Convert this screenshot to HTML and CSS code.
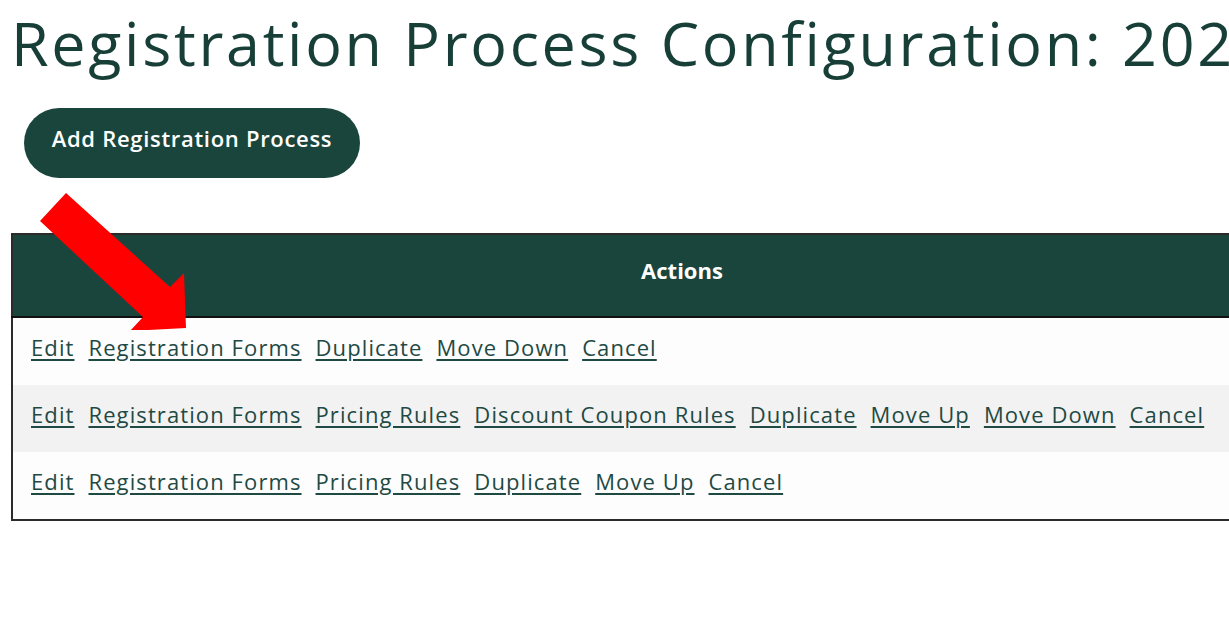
FILE: index.html
```html
<!DOCTYPE html>
<html>
<head>
<meta charset="utf-8">
<link rel="stylesheet" href="styles.css">
</head>
<body>
<div class="page">
  <h1 class="title">Registration Process Configuration: 2024-2025</h1>
  <div class="toolbar">
    <button class="btn-add" type="button">Add Registration Process</button>
  </div>
  <div class="table-wrap">
    <table class="grid">
      <thead>
        <tr><th>Actions</th></tr>
      </thead>
      <tbody>
        <tr class="row-a"><td>
          <a href="#">Edit</a><a href="#">Registration Forms</a><a href="#">Duplicate</a><a href="#">Move Down</a><a href="#">Cancel</a>
        </td></tr>
        <tr class="row-b"><td>
          <a href="#">Edit</a><a href="#">Registration Forms</a><a href="#">Pricing Rules</a><a href="#">Discount Coupon Rules</a><a href="#">Duplicate</a><a href="#">Move Up</a><a href="#">Move Down</a><a href="#">Cancel</a>
        </td></tr>
        <tr class="row-c"><td>
          <a href="#">Edit</a><a href="#">Registration Forms</a><a href="#">Pricing Rules</a><a href="#">Duplicate</a><a href="#">Move Up</a><a href="#">Cancel</a>
        </td></tr>
      </tbody>
    </table>
  </div>
  <svg class="arrow" width="200" height="150" viewBox="0 180 200 150" xmlns="http://www.w3.org/2000/svg">
    <polygon points="40,221 66,193 170,287 184,273 186,328 130,331 143,317" fill="#ff0000"/>
  </svg>
</div>
</body>
</html>
```

FILE: styles.css
```css
html, body {
  margin: 0;
  padding: 0;
  background: #ffffff;
}
body {
  font-family: "Open Sans", "Liberation Sans", sans-serif;
  overflow: hidden;
}
.page {
  position: relative;
  width: 1229px;
  height: 624px;
  overflow: hidden;
}
.title {
  margin: 1px 0 0 0;
  padding-left: 11px;
  font-size: 61px;
  line-height: 83px;
  font-weight: 400;
  color: #173f37;
  white-space: nowrap;
  letter-spacing: 2.7px;
}
.toolbar {
  padding: 24px 0 0 24px;
}
.btn-add {
  width: 336px;
  height: 70px;
  border: none;
  border-radius: 35px;
  background: #1a453c;
  color: #ffffff;
  font-family: "Open Sans", "Liberation Sans", sans-serif;
  font-size: 22px;
  font-weight: 600;
  padding: 0 0 10px 0;
  letter-spacing: 0.7px;
}
.table-wrap {
  padding: 55px 0 0 11px;
}
.grid {
  width: 1342px;
  border-collapse: collapse;
  border: 2px solid #2b2b2b;
}
.grid th {
  height: 69px;
  background: #1a453c;
  color: #ffffff;
  font-size: 22px;
  font-weight: 700;
  text-align: center;
  border-bottom: 2px solid #111;
  padding: 0 0 12px 0;
}
.grid td {
  height: 57px;
  padding: 0 0 10px 18px;
  font-size: 22px;
  white-space: nowrap;
  letter-spacing: 1.1px;
}
.row-a td { background: #fdfdfd; }
.row-b td { background: #f2f2f2; }
.row-c td { background: #fdfdfd; }
.grid a {
  color: #1f4a44;
  text-decoration: underline;
  text-underline-offset: 3px;
  margin-right: 14px;
}
.arrow {
  position: absolute;
  left: 0;
  top: 180px;
}
```
